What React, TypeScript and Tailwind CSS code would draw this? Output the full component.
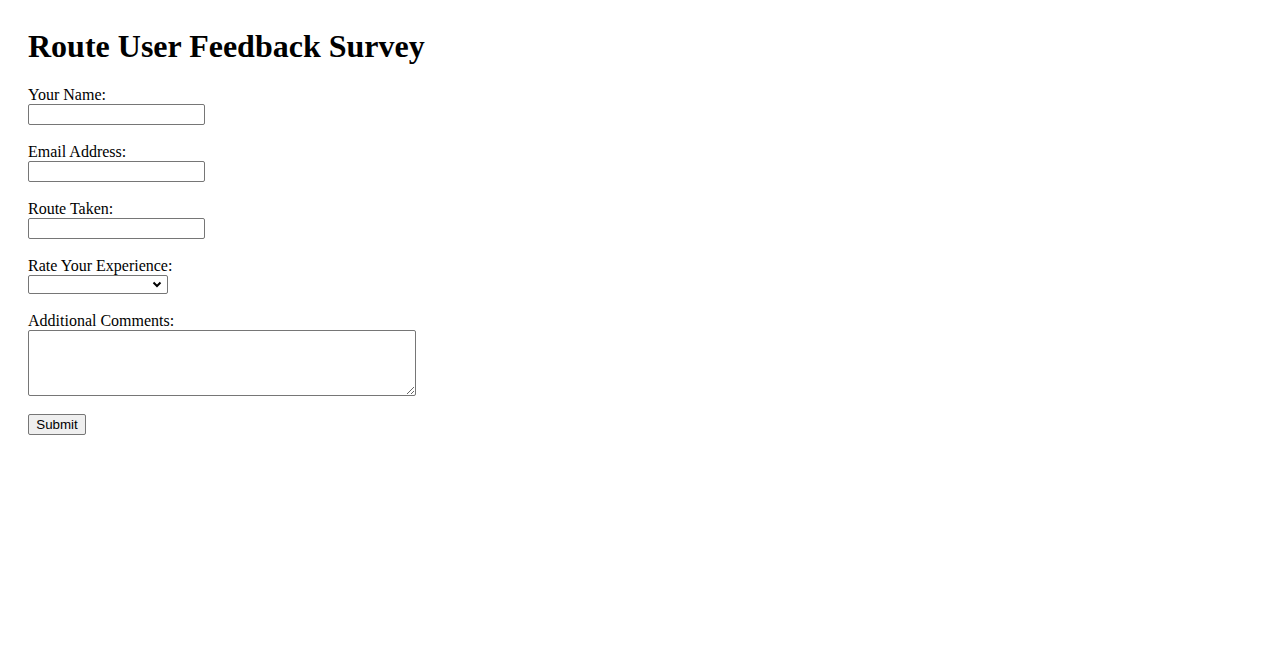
import React from 'react'

const serif = { fontFamily: '"Liberation Serif", "Times New Roman", serif' }

function Field({ label, children }: { label: string; children: React.ReactNode }) {
  return (
    <div className="flex flex-col items-start">
      <label className="text-[16px] leading-[18px] text-black">{label}</label>
      {children}
    </div>
  )
}

const inputCls =
  'w-[177px] h-[21px] border border-[#767676] rounded-[2px] bg-white px-[2px] text-[13.33px] outline-none'

export default function App() {
  return (
    <div className="min-h-screen bg-white text-black pl-[28px] pt-[28px]" style={serif}>
      <h1 className="text-[32px] leading-[37px] font-bold">Route User Feedback Survey</h1>

      <form className="mt-[21px] flex flex-col gap-[18px]" onSubmit={(e) => e.preventDefault()}>
        <Field label="Your Name:">
          <input type="text" className={inputCls} />
        </Field>
        <Field label="Email Address:">
          <input type="email" className={inputCls} />
        </Field>
        <Field label="Route Taken:">
          <input type="text" className={inputCls} />
        </Field>
        <Field label="Rate Your Experience:">
          <div className="relative">
            <select className="block appearance-none w-[140px] h-[19px] border border-[#767676] rounded-[2px] bg-white text-[13.33px] outline-none">
              <option value=""></option>
              <option value="5">Excellent</option>
              <option value="4">Good</option>
              <option value="3">Average</option>
              <option value="2">Poor</option>
              <option value="1">Very Poor</option>
            </select>
            <svg
              className="pointer-events-none absolute right-[6px] top-[6px]"
              width="10"
              height="7"
              viewBox="0 0 10 7"
            >
              <path d="M1.5 1.5 L5 5 L8.5 1.5" fill="none" stroke="#000" strokeWidth="2" />
            </svg>
          </div>
        </Field>
        <div className="flex flex-col items-start">
          <label className="text-[16px] leading-[18px] text-black">Additional Comments:</label>
          <textarea className="block w-[388px] h-[66px] border border-[#767676] rounded-[2px] bg-white outline-none resize text-[13.33px]" />
        </div>
        <div className="flex">
          <button
            type="submit"
            className="h-[21px] w-[58px] border border-[#767676] rounded-[2px] bg-[#efefef] text-[13.33px] leading-[15px] text-black"
            style={{ fontFamily: '"Liberation Sans", Arial, sans-serif' }}
          >
            Submit
          </button>
        </div>
      </form>
    </div>
  )
}
